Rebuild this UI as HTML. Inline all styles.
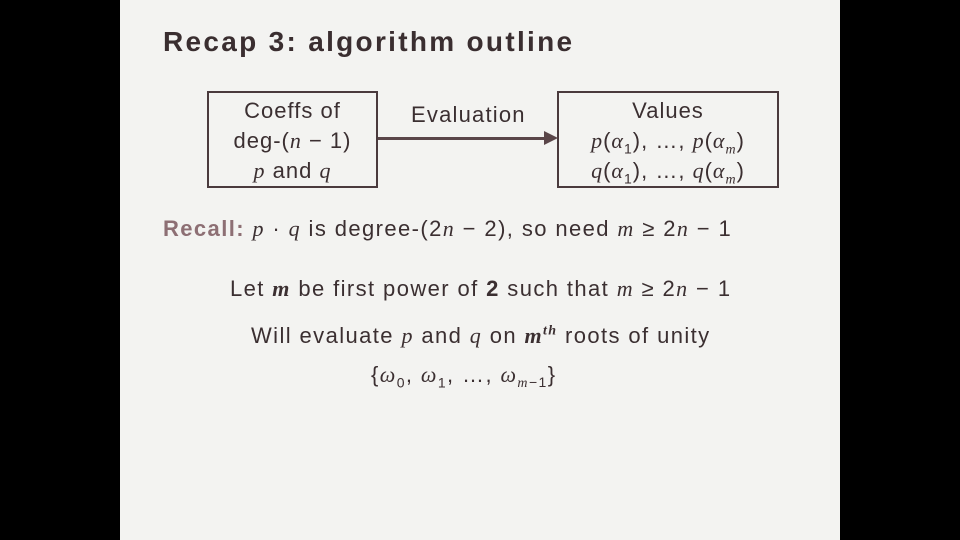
<!DOCTYPE html>
<html><head><style>
body{margin:0;width:960px;height:540px;background:#000;position:relative;overflow:hidden;font-family:"Liberation Sans",sans-serif;color:#3b2f31}
.slide{position:absolute;left:120px;top:0;width:720px;height:540px;background:#f3f3f1}
.t{position:absolute;white-space:nowrap;font-size:22px;letter-spacing:1.4px}
i{font-family:"Liberation Serif",serif;font-style:italic}
sub,sup{font-size:14px;line-height:0}
.box{position:absolute;border:2px solid #4a3a3d;box-sizing:border-box;text-align:center;font-size:22px;letter-spacing:1px;line-height:30px;padding-top:3px;white-space:nowrap}
</style></head><body>
<div class="slide"></div>
<div class="t" style="left:163px;top:26px;font-size:28px;font-weight:bold;letter-spacing:2.3px;color:#3a2e30">Recap 3: algorithm outline</div>
<div class="box" style="left:207px;top:91px;width:171px;height:97px">Coeffs of<br>deg-(<i>n</i> − 1)<br><i>p</i> and <i>q</i></div>
<div class="box" style="left:557px;top:91px;width:222px;height:97px">Values<br><i>p</i>(<i>α</i><sub>1</sub>), …, <i>p</i>(<i>α<sub>m</sub></i>)<br><i>q</i>(<i>α</i><sub>1</sub>), …, <i>q</i>(<i>α<sub>m</sub></i>)</div>
<div class="t" style="left:411px;top:102px;letter-spacing:1.2px">Evaluation</div>
<div style="position:absolute;left:378px;top:137px;width:168px;height:3px;background:#5a4649"></div>
<div style="position:absolute;left:544px;top:131px;width:0;height:0;border-left:14px solid #5a4649;border-top:7px solid transparent;border-bottom:7px solid transparent"></div>
<div class="t" style="left:163px;top:216px"><b style="color:#8d6f74">Recall:</b> <i>p</i> · <i>q</i> is degree-(2<i>n</i> − 2), so need <i>m</i> ≥ 2<i>n</i> − 1</div>
<div class="t" style="left:230px;top:276px">Let <b><i>m</i></b> be first power of <b>2</b> such that <i>m</i> ≥ 2<i>n</i> − 1</div>
<div class="t" style="left:251px;top:323px">Will evaluate <i>p</i> and <i>q</i> on <b><i>m<sup>th</sup></i></b> roots of unity</div>
<div class="t" style="left:371px;top:362px">{<i>ω</i><sub>0</sub>, <i>ω</i><sub>1</sub>, …, <i>ω</i><sub><i>m</i>−1</sub>}</div>
</body></html>
